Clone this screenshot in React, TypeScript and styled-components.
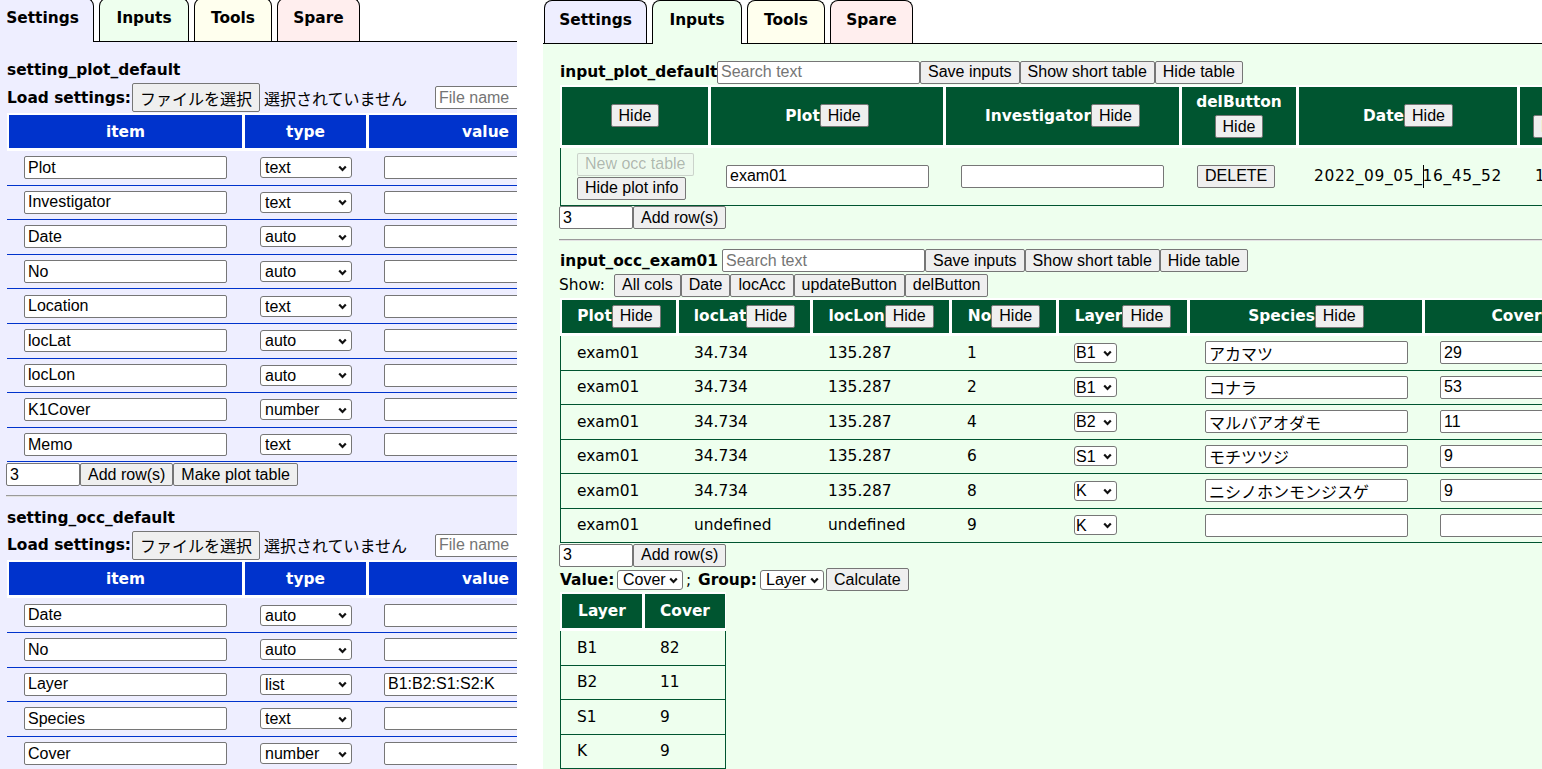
import React from "react";
import styled, { createGlobalStyle, css } from "styled-components";

const LAVENDER = "#eeeeff";
const MINT = "#eeffee";
const CREAM = "#ffffee";
const ROSE = "#ffeeee";
const BLUE = "#0033cc";
const FOREST = "#005530";

type Tone = "blue" | "green";
const toneColor = (t: Tone) => (t === "blue" ? BLUE : FOREST);

const GlobalStyle = createGlobalStyle`
  html, body { margin: 0; padding: 0; background: #ffffff; }
  body {
    font-family: "DejaVu Sans", Verdana, "Noto Sans CJK JP", sans-serif;
    font-size: 15.4px;
    color: #000;
  }
`;

const controlFont = css`
  font-family: "Liberation Sans", Arial, "Noto Sans CJK JP", sans-serif;
  font-size: 16px;
`;

/* ---------- frame ---------- */

const Screen = styled.div`
  display: flex;
  gap: 26px;
  width: 1542px;
  height: 769px;
  overflow: hidden;
  background: #fff;
`;

const Viewport = styled.div<{ $w: number }>`
  flex: 0 0 ${(p) => p.$w}px;
  height: 769px;
  overflow: hidden;
`;

const Page = styled.div<{ $dx: number; $dy: number }>`
  display: flex;
  flex-direction: column;
  width: 1100px;
  height: 800px;
  margin: ${(p) => p.$dy}px 0 0 ${(p) => p.$dx}px;
  background: #fff;
`;

const TabBar = styled.div`
  box-sizing: border-box;
  display: flex;
  align-items: flex-end;
  gap: 5px;
  height: 44px;
  padding-left: 1px;
  border-bottom: 1px solid #000;
  background: #fff;
  flex: none;
`;

const Tab = styled.div<{ $bg: string; $w: number; $active: boolean }>`
  box-sizing: border-box;
  flex: none;
  width: ${(p) => p.$w}px;
  height: ${(p) => (p.$active ? 44 : 43)}px;
  margin-bottom: ${(p) => (p.$active ? -1 : 0)}px;
  padding-top: 10px;
  border: 1px solid #000;
  border-bottom: none;
  border-radius: 8px 8px 0 0;
  background: ${(p) => p.$bg};
  font-weight: bold;
  font-size: 15.4px;
  line-height: 18px;
  text-align: center;
  white-space: nowrap;
`;

const Content = styled.div<{ $bg: string }>`
  flex: 1;
  padding: 16px 16px 0 16px;
  background: ${(p) => p.$bg};
`;

/* ---------- rows & text ---------- */

const Bar = styled.div<{ $h?: number }>`
  display: flex;
  align-items: center;
  height: ${(p) => p.$h ?? 24.5}px;
  white-space: nowrap;
`;

const Title = styled.span<{ $w?: number }>`
  box-sizing: border-box;
  flex: none;
  font-weight: bold;
  padding-left: 1px;
  ${(p) => (p.$w ? `width: ${p.$w}px;` : "")}
`;

const Plain = styled.span<{ $w?: number; $pl?: number }>`
  box-sizing: border-box;
  flex: none;
  padding-left: ${(p) => p.$pl ?? 0}px;
  ${(p) => (p.$w ? `width: ${p.$w}px;` : "")}
`;

const Rule = styled.hr`
  box-sizing: border-box;
  height: 2px;
  margin: 8.5px 0 8px 0;
  border: none;
  border-top: 1px solid #9a9a9a;
  border-bottom: 1px solid #e2e2e2;
`;

/* ---------- controls ---------- */

const Btn = styled.button<{ $h?: number; $ml?: number }>`
  ${controlFont}
  box-sizing: border-box;
  flex: none;
  height: ${(p) => p.$h ?? 23}px;
  margin: 0 0 0 ${(p) => p.$ml ?? 0}px;
  padding: 0 7px;
  border: 1px solid #767676;
  border-radius: 2px;
  background: #efefef;
  color: #000;
  white-space: nowrap;
  &:disabled {
    color: rgba(16, 16, 16, 0.3);
    background: rgba(239, 239, 239, 0.3);
    border-color: rgba(118, 118, 118, 0.3);
  }
`;

const Field = styled.input<{ $w?: number; $ml?: number }>`
  ${controlFont}
  display: block;
  box-sizing: border-box;
  flex: none;
  width: ${(p) => p.$w ?? 203}px;
  height: 23px;
  margin: 0 0 0 ${(p) => p.$ml ?? 0}px;
  padding: 1px 3px;
  border: 1px solid #767676;
  border-radius: 2px;
  background: #fff;
  color: #000;
  &::placeholder {
    color: #757575;
  }
`;

const SelectWrap = styled.span<{ $w: number; $h: number }>`
  position: relative;
  display: flex;
  flex: none;
  width: ${(p) => p.$w}px;
  height: ${(p) => p.$h}px;
`;

const SelectBox = styled.select<{ $pl: number }>`
  ${controlFont}
  appearance: none;
  -webkit-appearance: none;
  box-sizing: border-box;
  width: 100%;
  height: 100%;
  margin: 0;
  padding: 0 16px 0 ${(p) => p.$pl}px;
  border: 1px solid #767676;
  border-radius: 3px;
  background: #fff;
  color: #000;
`;

const Chevron = styled.svg`
  position: absolute;
  right: 5px;
  top: 50%;
  width: 9px;
  height: 7px;
  margin-top: -3px;
  pointer-events: none;
`;

function Select({
  w,
  h,
  pl,
  value,
  options,
}: {
  w: number;
  h: number;
  pl: number;
  value: string;
  options: string[];
}) {
  return (
    <SelectWrap $w={w} $h={h}>
      <SelectBox $pl={pl} defaultValue={value}>
        {options.map((o) => (
          <option key={o} value={o}>
            {o}
          </option>
        ))}
      </SelectBox>
      <Chevron viewBox="0 0 9 7">
        <path d="M1.2 1.4 L4.5 4.9 L7.8 1.4" fill="none" stroke="#111" strokeWidth="2.2" />
      </Chevron>
    </SelectWrap>
  );
}

const FilePicker = styled.span`
  display: flex;
  align-items: center;
  gap: 4px;
  flex: none;
  width: 298px;
  font-family: "Noto Sans CJK JP", sans-serif;
  font-size: 16px;
`;

/* ---------- tables ---------- */

const Grid = styled.table<{ $w: number }>`
  border-collapse: separate;
  border-spacing: 0;
  table-layout: fixed;
  width: ${(p) => p.$w}px;
  margin-left: 1px;
`;

const Col = styled.col<{ $w: number }>`
  width: ${(p) => p.$w}px;
`;

const HeadCell = styled.th<{ $tone: Tone; $h: number }>`
  box-sizing: content-box;
  height: ${(p) => p.$h}px;
  padding: 0;
  background: ${(p) => toneColor(p.$tone)};
  color: #fff;
  font-weight: bold;
  font-size: 15.4px;
  text-align: center;
  vertical-align: middle;
  white-space: nowrap;
  border-top: 2px solid #fff;
  border-bottom: 3px solid #fff;
  border-left: 2px solid #fff;
  border-right: 1px solid #fff;
`;

const HeadInner = styled.div<{ $stack?: boolean }>`
  display: flex;
  flex-direction: ${(p) => (p.$stack ? "column" : "row")};
  align-items: center;
  justify-content: center;
  gap: ${(p) => (p.$stack ? 4 : 0)}px;
`;

const BodyCell = styled.td<{ $tone: Tone; $h: number }>`
  box-sizing: content-box;
  height: ${(p) => p.$h}px;
  padding: 0 0 0 17px;
  text-align: left;
  vertical-align: middle;
  white-space: nowrap;
  border-bottom: 1px solid ${(p) => toneColor(p.$tone)};
  ${(p) =>
    p.$tone === "green" &&
    css`
      &:first-child {
        border-left: 1px solid ${FOREST};
        padding-left: 16px;
      }
      &:last-child {
        border-right: 1px solid ${FOREST};
      }
    `}
`;

const Stack = styled.div`
  display: flex;
  flex-direction: column;
  align-items: flex-start;
  gap: 1px;
`;

const Stamp = styled.span`
  letter-spacing: 0.65px;
`;

const Caret = styled.span`
  display: inline-block;
  width: 1px;
  height: 23px;
  margin-right: -1px;
  background: #000;
  vertical-align: middle;
`;

/* ---------- tabs ---------- */

const TABS = [
  { name: "Settings", bg: LAVENDER, w: 103 },
  { name: "Inputs", bg: MINT, w: 90 },
  { name: "Tools", bg: CREAM, w: 78 },
  { name: "Spare", bg: ROSE, w: 83 },
];

function TabStrip({ active }: { active: string }) {
  return (
    <TabBar>
      {TABS.map((t) => (
        <Tab key={t.name} $bg={t.bg} $w={t.w} $active={t.name === active}>
          {t.name}
        </Tab>
      ))}
    </TabBar>
  );
}

/* ---------- settings page ---------- */

const TYPE_OPTIONS = ["text", "auto", "number", "list"];

const PLOT_SETTINGS: [string, string, string][] = [
  ["Plot", "text", ""],
  ["Investigator", "text", ""],
  ["Date", "auto", ""],
  ["No", "auto", ""],
  ["Location", "text", ""],
  ["locLat", "auto", ""],
  ["locLon", "auto", ""],
  ["K1Cover", "number", ""],
  ["Memo", "text", ""],
];

const OCC_SETTINGS: [string, string, string][] = [
  ["Date", "auto", ""],
  ["No", "auto", ""],
  ["Layer", "list", "B1:B2:S1:S2:K"],
  ["Species", "text", ""],
  ["Cover", "number", ""],
];

function SettingTable({ rows }: { rows: [string, string, string][] }) {
  return (
    <Grid $w={596}>
      <colgroup>
        <Col $w={236} />
        <Col $w={124} />
        <Col $w={236} />
      </colgroup>
      <thead>
        <tr>
          <HeadCell $tone="blue" $h={33}>item</HeadCell>
          <HeadCell $tone="blue" $h={33}>type</HeadCell>
          <HeadCell $tone="blue" $h={33}>value</HeadCell>
        </tr>
      </thead>
      <tbody>
        {rows.map(([item, type, value]) => (
          <tr key={item}>
            <BodyCell $tone="blue" $h={33.6}>
              <Field defaultValue={item} />
            </BodyCell>
            <BodyCell $tone="blue" $h={33.6}>
              <Select w={92} h={21} pl={4} value={type} options={TYPE_OPTIONS} />
            </BodyCell>
            <BodyCell $tone="blue" $h={33.6}>
              <Field defaultValue={value} />
            </BodyCell>
          </tr>
        ))}
      </tbody>
    </Grid>
  );
}

function LoadSettings() {
  return (
    <Bar $h={30.5}>
      <Title $w={126}>Load settings:</Title>
      <FilePicker>
        <Btn $h={29}>ファイルを選択</Btn>
        <span>選択されていません</span>
      </FilePicker>
      <Field $ml={5} placeholder="File name" />
    </Bar>
  );
}

function SettingsPanel() {
  return (
    <>
      <Bar>
        <Title>setting_plot_default</Title>
      </Bar>
      <LoadSettings />
      <SettingTable rows={PLOT_SETTINGS} />
      <Bar>
        <Field $w={74} defaultValue="3" />
        <Btn>Add row(s)</Btn>
        <Btn>Make plot table</Btn>
      </Bar>
      <Rule />
      <Bar>
        <Title>setting_occ_default</Title>
      </Bar>
      <LoadSettings />
      <SettingTable rows={OCC_SETTINGS} />
    </>
  );
}

/* ---------- inputs page ---------- */

const LAYERS = ["B1", "B2", "S1", "S2", "K"];

const OCC_ROWS = [
  { lat: "34.734", lon: "135.287", no: "1", layer: "B1", sp: "アカマツ", cover: "29" },
  { lat: "34.734", lon: "135.287", no: "2", layer: "B1", sp: "コナラ", cover: "53" },
  { lat: "34.734", lon: "135.287", no: "4", layer: "B2", sp: "マルバアオダモ", cover: "11" },
  { lat: "34.734", lon: "135.287", no: "6", layer: "S1", sp: "モチツツジ", cover: "9" },
  { lat: "34.734", lon: "135.287", no: "8", layer: "K", sp: "ニシノホンモンジスゲ", cover: "9" },
  { lat: "undefined", lon: "undefined", no: "9", layer: "K", sp: "", cover: "" },
];

const SUMMARY = [
  ["B1", "82"],
  ["B2", "11"],
  ["S1", "9"],
  ["K", "9"],
];

function TableTools({ title, w }: { title: string; w: number }) {
  return (
    <Bar>
      <Title $w={w}>{title}</Title>
      <Field placeholder="Search text" />
      <Btn>Save inputs</Btn>
      <Btn>Show short table</Btn>
      <Btn>Hide table</Btn>
    </Bar>
  );
}

function AddRows() {
  return (
    <Bar>
      <Field $w={74} defaultValue="3" />
      <Btn>Add row(s)</Btn>
    </Bar>
  );
}

function LabeledHead({ label, h, stack }: { label: string; h: number; stack?: boolean }) {
  return (
    <HeadCell $tone="green" $h={h}>
      <HeadInner $stack={stack}>
        {label && <span>{label}</span>}
        <Btn>Hide</Btn>
      </HeadInner>
    </HeadCell>
  );
}

function PlotTable() {
  return (
    <Grid $w={1036}>
      <colgroup>
        {[149, 235, 236, 117, 221, 78].map((w, i) => (
          <Col key={i} $w={w} />
        ))}
      </colgroup>
      <thead>
        <tr>
          <LabeledHead label="" h={58} />
          <LabeledHead label="Plot" h={58} />
          <LabeledHead label="Investigator" h={58} />
          <LabeledHead label="delButton" h={58} stack />
          <LabeledHead label="Date" h={58} />
          <LabeledHead label="No" h={58} stack />
        </tr>
      </thead>
      <tbody>
        <tr>
          <BodyCell $tone="green" $h={57}>
            <Stack>
              <Btn disabled>New occ table</Btn>
              <Btn>Hide plot info</Btn>
            </Stack>
          </BodyCell>
          <BodyCell $tone="green" $h={57}>
            <Field defaultValue="exam01" />
          </BodyCell>
          <BodyCell $tone="green" $h={57}>
            <Field defaultValue="" />
          </BodyCell>
          <BodyCell $tone="green" $h={57}>
            <Btn>DELETE</Btn>
          </BodyCell>
          <BodyCell $tone="green" $h={57}>
            <Stamp>2022_09_05_</Stamp>
            <Caret />
            <Stamp>16_45_52</Stamp>
          </BodyCell>
          <BodyCell $tone="green" $h={57}>
            1
          </BodyCell>
        </tr>
      </tbody>
    </Grid>
  );
}

function OccTable() {
  const heads = ["Plot", "locLat", "locLon", "No", "Layer", "Species", "Cover"];
  return (
    <Grid $w={1098}>
      <colgroup>
        {[117, 134, 139, 107, 131, 235, 235].map((w, i) => (
          <Col key={i} $w={w} />
        ))}
      </colgroup>
      <thead>
        <tr>
          {heads.map((h) => (
            <LabeledHead key={h} label={h} h={33.5} />
          ))}
        </tr>
      </thead>
      <tbody>
        {OCC_ROWS.map((r, i) => (
          <tr key={i}>
            <BodyCell $tone="green" $h={33.5}>exam01</BodyCell>
            <BodyCell $tone="green" $h={33.5}>{r.lat}</BodyCell>
            <BodyCell $tone="green" $h={33.5}>{r.lon}</BodyCell>
            <BodyCell $tone="green" $h={33.5}>{r.no}</BodyCell>
            <BodyCell $tone="green" $h={33.5}>
              <Select w={43} h={20} pl={1} value={r.layer} options={LAYERS} />
            </BodyCell>
            <BodyCell $tone="green" $h={33.5}>
              <Field defaultValue={r.sp} />
            </BodyCell>
            <BodyCell $tone="green" $h={33.5}>
              <Field defaultValue={r.cover} />
            </BodyCell>
          </tr>
        ))}
      </tbody>
    </Grid>
  );
}

function SummaryTable() {
  return (
    <Grid $w={166}>
      <colgroup>
        <Col $w={83} />
        <Col $w={83} />
      </colgroup>
      <thead>
        <tr>
          <HeadCell $tone="green" $h={34}>Layer</HeadCell>
          <HeadCell $tone="green" $h={34}>Cover</HeadCell>
        </tr>
      </thead>
      <tbody>
        {SUMMARY.map(([layer, cover]) => (
          <tr key={layer}>
            <BodyCell $tone="green" $h={33.5}>{layer}</BodyCell>
            <BodyCell $tone="green" $h={33.5}>{cover}</BodyCell>
          </tr>
        ))}
      </tbody>
    </Grid>
  );
}

function InputsPanel() {
  return (
    <>
      <TableTools title="input_plot_default" w={158} />
      <PlotTable />
      <AddRows />
      <Rule />
      <TableTools title="input_occ_exam01" w={163} />
      <Bar>
        <Plain $w={55}>Show:</Plain>
        <Btn>All cols</Btn>
        <Btn>Date</Btn>
        <Btn>locAcc</Btn>
        <Btn>updateButton</Btn>
        <Btn>delButton</Btn>
      </Bar>
      <OccTable />
      <AddRows />
      <Bar>
        <Title $w={58}>Value:</Title>
        <Select w={66} h={20} pl={5} value="Cover" options={["Cover", "No"]} />
        <Plain $w={14} $pl={3}>;</Plain>
        <Title $w={63}>Group:</Title>
        <Select w={64} h={20} pl={5} value="Layer" options={["Layer", "Plot", "Species"]} />
        <Btn $ml={2}>Calculate</Btn>
      </Bar>
      <SummaryTable />
    </>
  );
}

/* ---------- app ---------- */

export default function App() {
  return (
    <>
      <GlobalStyle />
      <Screen>
        <Viewport $w={517}>
          <Page $dx={-10} $dy={-2}>
            <TabStrip active="Settings" />
            <Content $bg={LAVENDER}>
              <SettingsPanel />
            </Content>
          </Page>
        </Viewport>
        <Viewport $w={999}>
          <Page $dx={0} $dy={0}>
            <TabStrip active="Inputs" />
            <Content $bg={MINT}>
              <InputsPanel />
            </Content>
          </Page>
        </Viewport>
      </Screen>
    </>
  );
}
